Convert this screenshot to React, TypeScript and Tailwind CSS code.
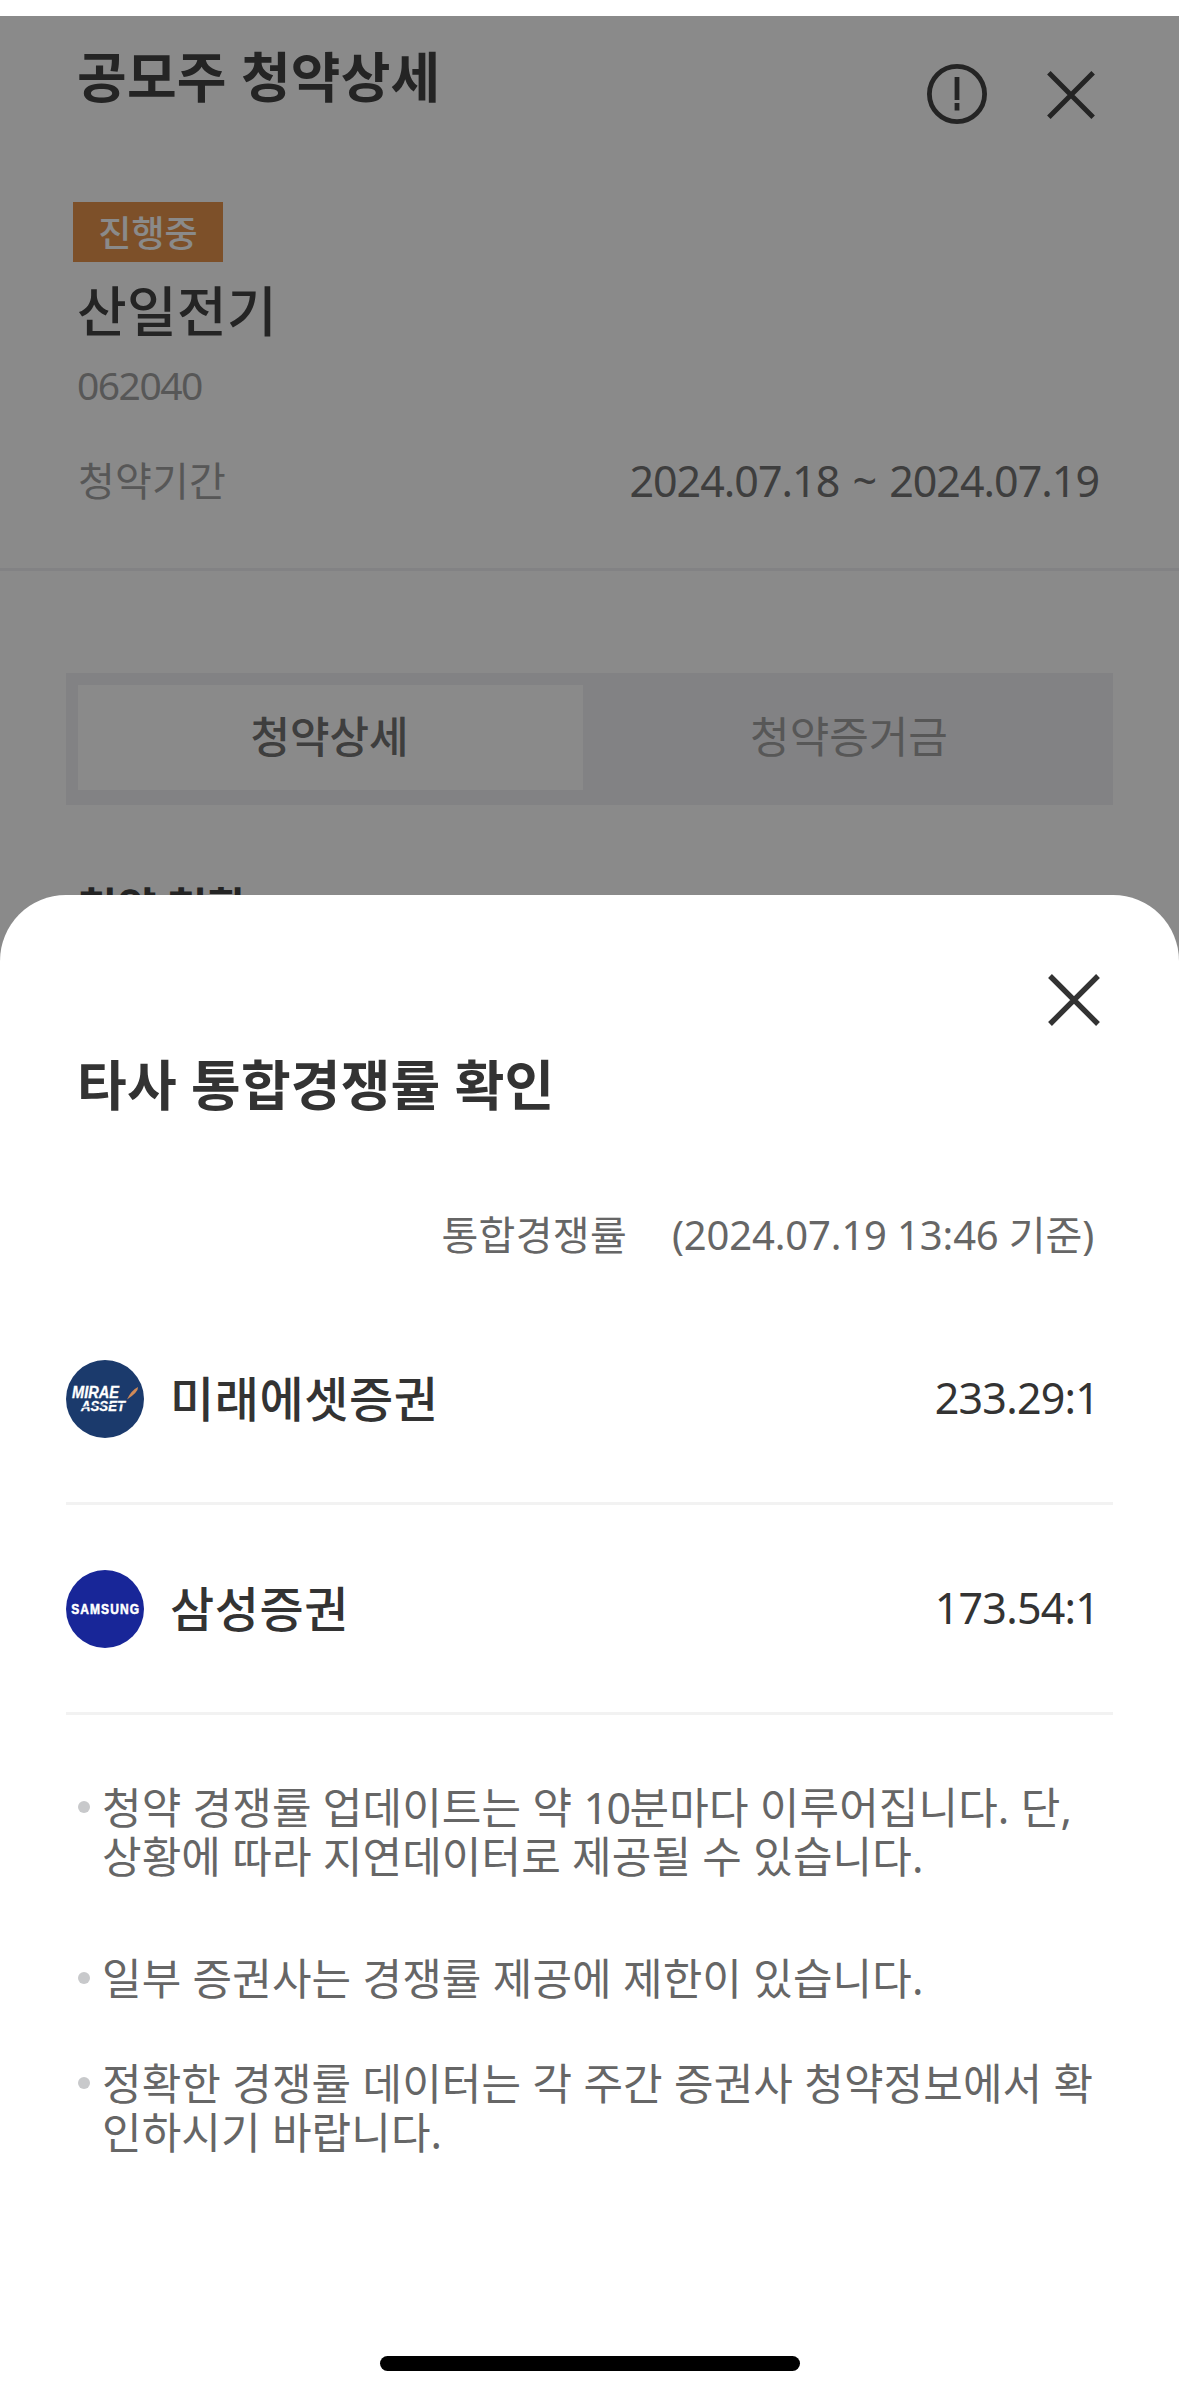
import React, { useState } from "react";

const brokers = [
  { name: "미래에셋증권", rate: "233.29:1", Logo: MiraeLogo },
  { name: "삼성증권", rate: "173.54:1", Logo: SamsungLogo },
];

function CloseIcon({ className }: { className?: string }) {
  return (
    <svg viewBox="0 0 52 52" className={className} fill="none" stroke="#333" strokeWidth="5.4">
      <path d="M2 2 L50 50 M50 2 L2 50" />
    </svg>
  );
}

function InfoIcon() {
  return (
    <svg viewBox="0 0 60 60" className="h-[60px] w-[60px]">
      <circle cx="30" cy="30" r="27.6" fill="none" stroke="#333" strokeWidth="4.8" />
      <path d="M27.6 13h4.8v23h-4.8z M27.6 39h4.8v7.6h-4.8z" fill="#333" />
    </svg>
  );
}

function MiraeLogo() {
  return (
    <svg viewBox="0 0 78 78" className="h-[78px] w-[78px]">
      <circle cx="39" cy="39" r="39" fill="#1b3a6c" />
      <g
        fill="#fff"
        stroke="#fff"
        strokeWidth="0.3"
        fontFamily="'Liberation Sans', sans-serif"
        fontWeight="700"
        fontStyle="italic"
      >
        <text x="6" y="37.6" fontSize="16" textLength="47" lengthAdjust="spacingAndGlyphs">
          MIRAE
        </text>
        <text x="15" y="51" fontSize="14" textLength="44" lengthAdjust="spacingAndGlyphs">
          ASSET
        </text>
      </g>
      <path d="M14 47.6 Q38 44 60 43.6" fill="none" stroke="#1b3a6c" strokeWidth="1" />
      <path d="M61 39.5 Q65 30.5 72 27 Q72.5 32 61 39.5z" fill="#d08a58" />
    </svg>
  );
}

function SamsungLogo() {
  return (
    <svg viewBox="0 0 78 78" className="h-[78px] w-[78px]">
      <circle cx="39" cy="39" r="39" fill="#182698" />
      <text
        x="6"
        y="44"
        transform="scale(0.86 1)"
        fill="#fff"
        stroke="#fff"
        strokeWidth="0.5"
        fontFamily="'Liberation Sans', sans-serif"
        fontWeight="700"
        fontSize="14"
        textLength="79"
        lengthAdjust="spacing"
      >
        SAMSUNG
      </text>
    </svg>
  );
}

function Note({ children, className }: { children: React.ReactNode; className?: string }) {
  return (
    <li className={`flex ${className ?? ""}`}>
      <span className="mt-[18px] mr-[12px] h-3 w-3 shrink-0 rounded-full bg-[#c8c9cb]" />
      <p className="text-[43px] leading-[49px] tracking-[0.1px] whitespace-nowrap text-[#666]">
        {children}
      </p>
    </li>
  );
}

export default function App() {
  const [tab, setTab] = useState(0);

  return (
    <div className="relative h-[2395px] w-[1179px] overflow-hidden bg-white pt-4 font-['Noto_Sans','Noto_Sans_CJK_KR',sans-serif] text-[#333]">
      {/* page behind the sheet */}
      <header className="flex h-[186px] items-start justify-between pt-[31px] pr-[84px] pl-[77px]">
        <h1 className="text-[54px] leading-[60px] font-bold tracking-[0.2px]">공모주 청약상세</h1>
        <div className="flex items-center gap-[60px] pt-[17px]">
          <button><InfoIcon /></button>
          <button className="pt-[2px]"><CloseIcon className="h-[48px] w-[48px]" /></button>
        </div>
      </header>

      <section className="h-[369px] border-b-[3px] border-[#eeeef2] pr-[80px] pl-[77px]">
        <span className="-ml-[4px] flex h-[60px] w-[150px] items-center justify-center bg-[#e48a3c] pt-[3px] text-[36px] leading-[57px] font-medium text-white">
          진행중
        </span>
        <h2 className="mt-[19px] text-[54px] leading-[60px] font-medium tracking-[0.3px]">산일전기</h2>
        <p className="mt-[20px] text-[39px] leading-[48px] tracking-[-1.5px] text-[#999]">062040</p>
        <div className="mt-[42px] flex items-center justify-between text-[40px] leading-[60px]">
          <span className="pl-px tracking-[0.2px] text-[#999]">청약기간</span>
          <span className="text-[43px] tracking-[-1px] text-[#666] [word-spacing:3px]">
            2024.07.18 ~ 2024.07.19
          </span>
        </div>
      </section>

      <div className="mx-[66px] mt-[102px] flex h-[132px] bg-[#eeeef2] px-3 pt-3 pb-[15px] text-[43px]">
        {["청약상세", "청약증거금"].map((label, i) => (
          <button
            key={label}
            onClick={() => setTab(i)}
            className={
              tab === i
                ? "w-[505px] bg-white pr-[2px] font-medium text-[#666]"
                : "flex-1 pl-[14px] text-[#999]"
            }
          >
            {label}
          </button>
        ))}
      </div>
      <h3 className="mt-[72px] pl-[78px] text-[42.5px] leading-[60px] font-bold tracking-[0.3px]">
        청약 현황
      </h3>

      {/* dim */}
      <div className="absolute inset-x-0 top-4 bottom-0 bg-[#161616]/50" />

      {/* bottom sheet */}
      <div className="absolute inset-x-0 top-[895px] bottom-0 flex flex-col rounded-t-[66px] bg-white px-[66px]">
        <button className="mt-[79px] mr-[13px] self-end">
          <CloseIcon className="h-[52px] w-[52px]" />
        </button>
        <h2 className="mt-[29px] pl-[11px] text-[54px] leading-[60px] font-bold tracking-[0.2px]">
          타사 통합경쟁률 확인
        </h2>
        <div className="mt-[90px] flex justify-end gap-[45px] pr-[19px] text-[40px] leading-[60px] text-[#666]">
          <span className="tracking-[0.3px]">통합경쟁률</span>
          <span className="tracking-[-0.15px]">(2024.07.19 13:46 기준)</span>
        </div>

        <ul className="mt-[30px]">
          {brokers.map(({ name, rate, Logo }) => (
            <li
              key={name}
              className="flex h-[210px] items-center border-b-[3px] border-[#f2f2f2] pr-[14px]"
            >
              <Logo />
              <span className="ml-[26px] text-[48px] leading-[60px] font-medium tracking-[0.6px]">
                {name}
              </span>
              <span className="ml-auto pb-px text-[43px] leading-[60px] tracking-[-0.8px]">{rate}</span>
            </li>
          ))}
        </ul>

        <ul className="mt-[68px] pl-[12px]">
          <Note>
            청약 경쟁률 업데이트는 약 <span className="tracking-[-1.5px]">10</span>분마다 이루어집니다. 단,
            <br />
            상황에 따라 지연데이터로 제공될 수 있습니다.
          </Note>
          <Note className="mt-[73px]">일부 증권사는 경쟁률 제공에 제한이 있습니다.</Note>
          <Note className="mt-[56px]">
            정확한 경쟁률 데이터는 각 주간 증권사 청약정보에서 확
            <br />
            인하시기 바랍니다.
          </Note>
        </ul>

        <div className="mt-auto mb-[24px] h-[15px] w-[420px] self-center rounded-full bg-black" />
      </div>
    </div>
  );
}
